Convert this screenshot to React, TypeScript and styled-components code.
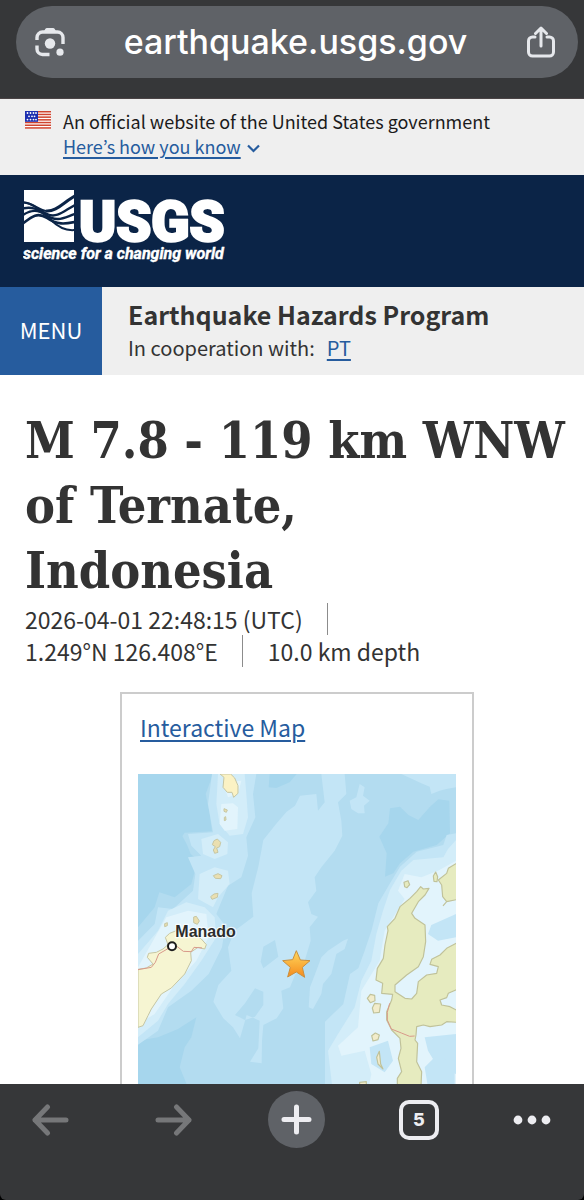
import React from "react";
import styled, { createGlobalStyle } from "styled-components";

const sans = `"Noto Sans CJK KR", "Noto Sans", sans-serif`;

const GlobalStyle = createGlobalStyle`
  * { box-sizing: border-box; }
  body { margin: 0; background: #000; font-family: ${sans}; color: #333; }
  button { border: 0; padding: 0; background: none; font: inherit; color: inherit; cursor: pointer; }
  a { color: #265c9e; text-decoration-thickness: 2px; text-underline-offset: 3px; }
  svg { display: block; }
`;

const Screen = styled.div`
  display: flex;
  flex-direction: column;
  height: 100vh;
`;

const AddressBar = styled.header`
  flex: none;
  padding: 6px 6px 20px 16px;
  background: #363739;
  border-bottom: 1px solid #4b4446;
`;

const AddressPill = styled.div`
  display: flex;
  align-items: center;
  justify-content: space-between;
  height: 72px;
  padding: 0 22px 0 19px;
  border-radius: 36px;
  background: #5f6267;
  color: #e6e8ec;
`;

const Host = styled.span`
  color: #fff;
  font: 500 34px/44px Inter, "Liberation Sans", sans-serif;
`;

const Page = styled.main`
  flex: 1;
  min-height: 0;
  overflow: hidden;
  background: #fff;
`;

const GovBanner = styled.section`
  display: flex;
  gap: 12px;
  height: 76px;
  padding: 10px 25px 0;
  background: #efefef;
  color: #1b1b1b;
  font-size: 18px;
  line-height: 25px;
`;

const Flag = styled.svg`
  flex: none;
  width: 26px;
  height: 18px;
  margin-top: 2px;
`;

const BannerText = styled.div`
  display: flex;
  flex-direction: column;
  align-items: flex-start;
`;

const BannerToggle = styled.button`
  display: flex;
  align-items: center;
  gap: 6px;
  color: #265c9e;
  span {
    text-decoration: underline;
    text-decoration-thickness: 2px;
    text-underline-offset: 3px;
  }
  svg {
    margin-top: 4px;
  }
`;

const Brand = styled.section`
  height: 112px;
  padding: 13px 23px 0;
  background: #0b2447;
`;

const BrandLink = styled.a`
  display: inline-block;
`;

const ProgramBar = styled.nav`
  display: flex;
  height: 88px;
  background: #efefef;
`;

const MenuButton = styled.button`
  width: 102px;
  padding-bottom: 4px;
  background: #265c9e;
  color: #fff;
  font-size: 22px;
  line-height: 32px;
`;

const ProgramInfo = styled.div`
  padding: 10px 26px 0;
`;

const ProgramName = styled.div`
  font-size: 25px;
  font-weight: 700;
  line-height: 34px;
`;

const Cooperation = styled.div`
  display: flex;
  gap: 12px;
  font-size: 20px;
  line-height: 33px;
`;

const Content = styled.article`
  padding: 33px 15px 0 25px;
`;

const Title = styled.h1`
  margin: 0;
  font: 700 50px/65px "DejaVu Serif Condensed", "DejaVu Serif", serif;
`;

const Facts = styled.ul`
  display: flex;
  flex-wrap: wrap;
  margin: 0;
  padding: 0;
  list-style: none;
  font-size: 23px;
  line-height: 32px;
`;

const Fact = styled.li`
  padding-right: 24px;
  margin-right: 25px;
  border-right: 1px solid #8c8c8c;
  &:last-child {
    border: 0;
    margin: 0;
    padding: 0;
  }
`;

const MapCard = styled.section`
  width: 354px;
  margin: 25px auto 0;
  padding: 17px 16px 16px;
  border: 2px solid #ccc;
`;

const MapTitle = styled.div`
  padding: 0 2px;
  font-size: 23px;
  line-height: 32px;
  margin-bottom: 31px;
`;

const MapPicture = styled.svg`
  width: 100%;
  height: auto;
`;

const Toolbar = styled.footer`
  flex: none;
  display: flex;
  align-items: flex-start;
  justify-content: space-between;
  height: 116px;
  padding: 7px 33px 0 22px;
  border-radius: 0 0 6px 6px;
  background: #363739;
  color: #ededf1;
`;

const ToolButton = styled.button<{ $dim?: boolean }>`
  display: flex;
  align-items: center;
  justify-content: center;
  width: 57px;
  height: 57px;
  color: ${(p) => (p.$dim ? "#767779" : "#ededf1")};
`;

const NewTab = styled(ToolButton)`
  border-radius: 50%;
  background: #5f6267;
`;

const MoreButton = styled(ToolButton)`
  width: 38px;
`;

const TabCount = styled.span`
  width: 40px;
  height: 40px;
  border: 4px solid currentColor;
  border-radius: 10px;
  font: 800 18px/32px Inter, sans-serif;
  text-align: center;
`;

function LensIcon() {
  return (
    <svg width="30" height="30" viewBox="0 0 30 30" fill="none" stroke="currentColor" strokeWidth="3.400" aria-hidden="true">
      <path d="M2 13v-2.500a5.500 5.500 0 0 1 5.500-5.500h15a5.500 5.500 0 0 1 5.500 5.500V17M2 18.500V22a5.500 5.500 0 0 0 5.500 5.500H14.500" />
      <path d="M8.500 6C9.500 2.500 10.500 1 12 1h6c1.500 0 2.500 1.500 3.500 5z" fill="currentColor" stroke="none" />
      <circle cx="15" cy="16.500" r="5.200" fill="currentColor" stroke="none" />
      <circle cx="25" cy="25.200" r="3.600" fill="currentColor" stroke="none" />
    </svg>
  );
}

function ShareIcon() {
  return (
    <svg width="30" height="32" viewBox="0 0 30 32" fill="none" stroke="currentColor" strokeWidth="3" strokeLinecap="round" strokeLinejoin="round" aria-hidden="true">
      <path d="M9 11H6.500A4 4 0 0 0 2.500 15v11a4 4 0 0 0 4 4h17a4 4 0 0 0 4-4V15a4 4 0 0 0-4-4H21" />
      <path d="M15 20V3M9.500 7.500 15 2l5.500 5.500" />
    </svg>
  );
}

function UsFlag() {
  return (
    <Flag viewBox="0 0 26 18" role="img" aria-label="U.S. flag">
      <rect width="26" height="18" fill="#fff" />
      {[0, 1, 2, 3, 4, 5, 6].map((i) => (
        <rect key={i} y={i * 2.7} width="26" height="1.5" fill="#d0442f" />
      ))}
      <rect width="13" height="10.800" fill="#1d2fb0" />
      {[2, 5.3, 8.6].map((y, r) =>
        [2.5, 5.5, 8.5, 11].slice(r % 2 ? 1 : 0).map((x) => (
          <circle key={`${x}-${y}`} cx={r % 2 ? x - 1.5 : x} cy={y} r=".9" fill="#fff" />
        ))
      )}
    </Flag>
  );
}

function UsgsLogo() {
  return (
    <svg width="220" height="82" viewBox="0 0 220 82" role="img" aria-label="USGS, science for a changing world">
      <clipPath id="mark"><path d="M1 2h50v52H1z" /></clipPath>
      <g clipPath="url(#mark)">
        <path d="M1 2h50v52H1z" fill="#fff" />
        <g fill="none" stroke="#0b2447">
          <path d="M52 8C41 14 33 24 23 23" strokeWidth="3" />
          <path d="M0 14.500C9 14 15 22 23 23" strokeWidth="2" />
          <path d="M0 20.500C9 18 16 22 24 26 34 31 42 22 52 17" strokeWidth="2.400" />
          <path d="M0 27C9 21 15 22 23 27 34 35 42 29 52 26" strokeWidth="2.400" />
          <path d="M0 35.500C9 28 15 24 24 30 34 37 42 36 52 34" strokeWidth="2.600" />
          <path d="M0 14.500C12 15 20 26 28 32 36 40 43 43 52 42" strokeWidth="2" />
        </g>
      </g>
      <text x="56" y="53" fill="#fff" stroke="#fff" strokeWidth="2.500" fontFamily="Roboto, sans-serif" fontWeight="900" fontSize="56">USGS</text>
      <text x="0" y="71" fill="#fff" stroke="#fff" strokeWidth=".4" fontFamily="Roboto, sans-serif" fontWeight="700" fontStyle="italic" fontSize="16">science for a changing world</text>
    </svg>
  );
}

const lightSea = "#c3e5f6";
const midSea = "#b3dcf0";
const deepSea = "#a6d6ed";

function EpicenterMap() {
  return (
    <MapPicture viewBox="0 0 954 1000" role="img" aria-label="Map of the epicenter between Manado and Ternate">
      <defs>
        <linearGradient id="star" x1="0" y1="0" x2="0" y2="1">
          <stop offset="0" stopColor="#ffd95e" />
          <stop offset="1" stopColor="#f58a1c" />
        </linearGradient>
      </defs>
      <rect width="954" height="1000" fill={midSea} />
      <g fill={deepSea}>
        <path d="M0 0H225L203 60 215 120 222 172 140 176 133 186 147 212 158 240 180 258 168 300 160 330 110 370 64 355 50 400 0 460Z" />
        <path d="M395 0 392 40 415 42 455 25 476 0Z" />
        <path d="M756 103 786 98 811 123 841 138 876 98 901 76 934 80 936 178 896 213 826 233 786 268 766 298 741 308 746 238 724 188 751 148Z" />
        <path d="M0 800 60 790 120 765 175 730 160 790 140 820 125 880 150 940 140 1000H0Z" />
      </g>
      <g fill={lightSea}>
        <path d="M222 0H355L345 60 352 130 325 190 330 245 310 310 270 335 245 395 235 420 262 455 252 520 212 600 160 650 90 700 60 770 0 812V500L50 450 60 400 105 405 165 350 172 300 150 250 190 245 160 215 150 180 225 175 210 90Z" />
        <path fillRule="evenodd" d="M471 95 486 65 535 60 540 110 560 85 550 0H620L625 60 600 85 610 140 613 185 590 230 550 280 530 310 535 350 510 385 520 420 540 428 515 460 518 500 500 560 471 603 456 640 430 650 436 703 416 733 376 753 372 800 371 868 336 863 361 823 365 740 326 723 306 793 285 760 256 733 226 683 241 633 280 590 270 520 290 470 346 428 341 358 361 278 376 198 416 148 446 113ZM376 518 411 498 421 548 376 583 368 563ZM351 643 376 653 376 693 351 728 321 738 291 723 321 688Z" />
        <path d="M680 40 665 30 655 70 635 80 640 105 660 118 680 118 678 95 695 80 675 65Z" />
        <path d="M790 0 850 28 875 38 880 60 905 50 925 45 954 40V0Z" />
        <path d="M630 494 615 500 570 530 550 550 535 590 516 640 512 700 525 705 550 660 555 630 580 600 595 540 620 525Z" />
        <path d="M954 178 926 183 916 213 836 233 786 278 756 328 721 388 701 468 680 530 661 583 636 600 616 690 561 743 561 1000H954Z" />
      </g>
      <g fill="#d3edf9">
        <path d="M240 0H320L325 60 330 130 315 180 275 185 245 150 235 90ZM190 195 240 180 270 205 268 240 230 255 195 240ZM185 300 230 280 270 290 275 330 240 370 225 400 180 375ZM90 410 145 385 200 400 230 430 235 490 190 560 140 630 90 690 60 740 0 790V540L60 470Z" />
        <path d="M954 198 930 225 916 250 826 258 790 290 756 348 735 410 715 480 700 560 670 620 650 700 600 780 570 830 590 1000H954Z" />
      </g>
      <g fill="#e2f4fc">
        <path d="M255 25 310 20 300 60 270 70ZM250 90 285 88 300 100 298 165 260 170 245 150ZM85 430 150 410 205 420 212 490 175 560 105 640 50 720 0 750V580Z" />
        <path d="M954 260 900 290 850 310 800 300 780 350 800 375 740 470 725 560 670 650 660 760 600 815 610 845 680 830 700 900 680 1000H954Z" />
      </g>
      <g fill={lightSea}>
        <path d="M880 453 954 420V490L900 500 870 480ZM860 790 954 780V900L900 880 870 830Z" />
        <path d="M695 820 750 800 765 860 740 895 700 870ZM860 880 890 850 950 860V1000H880Z" />
      </g>
      <g fill="#f6f5d2" stroke="#c6c6a3" strokeWidth="3" strokeLinejoin="round">
        <path d="M246 0 258 10 255 40 268 55 282 55 287 70 300 58 300 35 290 12 278 0Z" fill="#fbf2c4" />
        <path d="M0 586 25 582 45 570 28 550 32 538 55 535 75 525 90 512 82 490 95 478 115 470 165 478 190 495 205 512 200 525 180 520 158 535 160 560 140 600 100 642 70 660 40 705 30 725 15 755 0 760Z" />
        <path d="M258 104 268 108 265 115 258 112ZM259 130l4-2 1 10-5 2ZM228 200 238 195 248 205 245 218 236 222 240 235 230 238 226 228 232 218 223 212ZM226 305 240 299 252 305 248 314 232 313ZM218 368 228 360 240 358 238 370 222 376ZM167 429 175 427 184 441 178 451 167 446ZM80 449l8-3v9l-8 3Z" fill="#eadfb0" />
      </g>
      <g fill="#e6ebbf" stroke="#c0c29a" strokeWidth="3.500" strokeLinejoin="round">
        <path d="M836 353 848 338 856 345 873 343 861 363 841 383 821 418 831 433 861 453 863 503 856 548 841 578 806 603 771 633 771 653 801 673 821 675 836 658 841 623 866 603 896 598 901 578 876 571 881 556 906 543 926 523 960 505V645L931 658 926 671 906 678 911 693 936 698 960 711V745L926 743 911 753 876 758 856 753 836 758 834 783 831 798 839 808 836 863 851 893 846 1000H778V913L791 893 781 853 789 823 786 793 761 768 746 738 746 713 761 678 764 661 731 658 734 628 714 618 718 583 736 553 741 513 750 470 748 458 771 433 786 398 816 373Z" />
        <path d="M960 265 931 283 926 298 901 318 911 333 914 368 926 383 960 376ZM926 383 915 396" />
        <path d="M893 294 899 308 897 323 888 322 886 306ZM798 325 810 320 815 332 807 341 800 338Z" />
        <path d="M697 661 710 664 711 680 697 686 688 673ZM710 688 728 690 724 715 707 717 703 702ZM701 785 712 777 724 783 720 797 705 801ZM724 832 728 870 735 885 720 870 716 850ZM665 925l20-2v10h-20Z" fill="#f2eccb" />
      </g>
      <g fill="none" stroke="#d8998a" strokeWidth="3">
        <path d="M0 587 40 580 52 565 62 540 102 517M102 517 118 518 136 532 160 533 168 520 192 522" />
        <path d="M755 688 748 715 748 738 760 765 790 777 815 787 830 786" />
      </g>
      <circle cx="102" cy="517" r="12" fill="#fff" stroke="#1d1d1d" strokeWidth="6" />
      <text x="112" y="489" fontFamily="Liberation Sans, Arial, sans-serif" fontWeight="700" fontSize="48" fill="#2c2c2c" stroke="#fff" strokeWidth="7" strokeOpacity=".75" paintOrder="stroke">Manado</text>
      <path d="M475 530 487 558 516 560 493 580 500 610 475 594 449 609 457 580 434 560 464 557Z" fill="url(#star)" stroke="#c98f3d" strokeWidth="3" strokeLinejoin="round" />
    </MapPicture>
  );
}

function Arrow({ flip }: { flip?: boolean }) {
  return (
    <svg width="37" height="32" viewBox="0 0 37 32" fill="none" stroke="currentColor" strokeWidth="5" strokeLinecap="round" strokeLinejoin="round" aria-hidden="true">
      <path d={flip ? "M3 16h31M21.500 3 34 16 21.500 29" : "M34 16H3M15.500 3 3 16l12.500 13"} />
    </svg>
  );
}

export default function App() {
  return (
    <Screen>
      <GlobalStyle />
      <AddressBar>
        <AddressPill>
          <button aria-label="Search with camera"><LensIcon /></button>
          <Host>earthquake.usgs.gov</Host>
          <button aria-label="Share"><ShareIcon /></button>
        </AddressPill>
      </AddressBar>
      <Page>
        <GovBanner>
          <UsFlag />
          <BannerText>
            <div>An official website of the United States government</div>
            <BannerToggle>
              <span>Here’s how you know</span>
              <svg width="13" height="9" viewBox="0 0 13 9" fill="none" stroke="currentColor" strokeWidth="2.200" aria-hidden="true">
                <path d="M1 1.500 6.500 7 12 1.500" />
              </svg>
            </BannerToggle>
          </BannerText>
        </GovBanner>
        <Brand>
          <BrandLink href="#home"><UsgsLogo /></BrandLink>
        </Brand>
        <ProgramBar>
          <MenuButton>MENU</MenuButton>
          <ProgramInfo>
            <ProgramName>Earthquake Hazards Program</ProgramName>
            <Cooperation>
              <span>In cooperation with:</span>
              <a href="#pt">PT</a>
            </Cooperation>
          </ProgramInfo>
        </ProgramBar>
        <Content>
          <Title>M 7.8 - 119 km WNW of Ternate,<br />Indonesia</Title>
          <Facts>
            <Fact>2026-04-01 22:48:15 (UTC)</Fact>
            <Fact>1.249°N 126.408°E</Fact>
            <Fact>10.0 km depth</Fact>
          </Facts>
          <MapCard>
            <MapTitle><a href="#map">Interactive Map</a></MapTitle>
            <EpicenterMap />
          </MapCard>
        </Content>
      </Page>
      <Toolbar>
        <ToolButton $dim aria-label="Back"><Arrow /></ToolButton>
        <ToolButton $dim aria-label="Forward"><Arrow flip /></ToolButton>
        <NewTab aria-label="New tab">
          <svg width="31" height="31" viewBox="0 0 31 31" stroke="currentColor" strokeWidth="5" strokeLinecap="round" aria-hidden="true">
            <path d="M15.500 3v25M3 15.500h25" />
          </svg>
        </NewTab>
        <ToolButton aria-label="5 open tabs"><TabCount>5</TabCount></ToolButton>
        <MoreButton aria-label="More">
          <svg width="38" height="10" viewBox="0 0 38 10" fill="currentColor" aria-hidden="true">
            <circle cx="5" cy="5" r="4.400" /><circle cx="19" cy="5" r="4.400" /><circle cx="33" cy="5" r="4.400" />
          </svg>
        </MoreButton>
      </Toolbar>
    </Screen>
  );
}
